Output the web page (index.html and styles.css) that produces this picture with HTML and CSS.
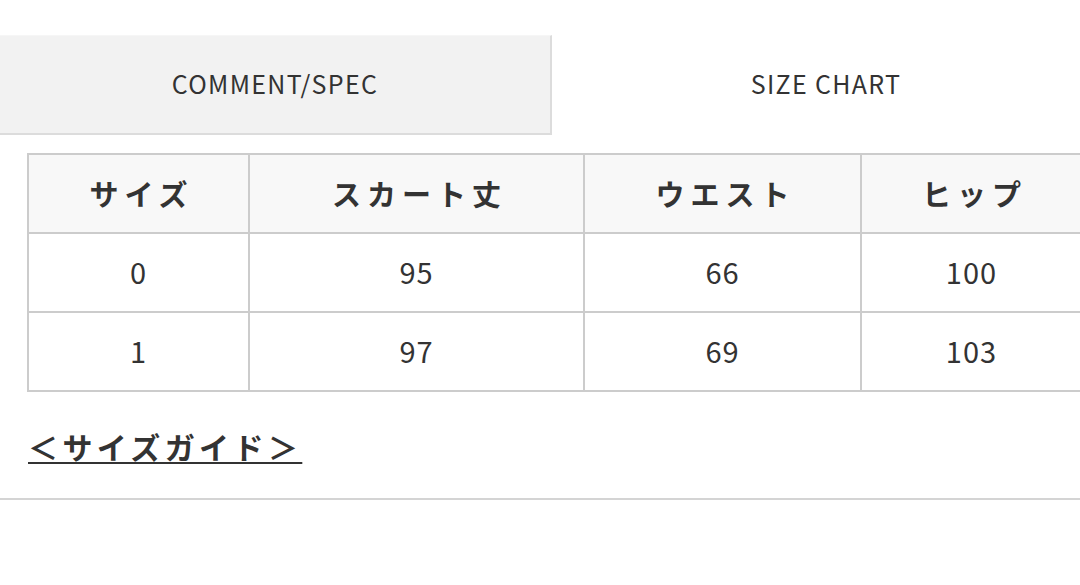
FILE: index.html
```html
<!DOCTYPE html>
<html lang="ja">
<head>
<meta charset="utf-8">
<link rel="stylesheet" href="styles.css">
</head>
<body>
<div class="tabs">
  <div class="tab tab-inactive">COMMENT/SPEC</div>
  <div class="tab tab-active">SIZE CHART</div>
</div>
<div class="content">
  <table class="chart">
    <colgroup>
      <col class="c1"><col class="c2"><col class="c3"><col class="c4">
    </colgroup>
    <thead>
      <tr><th>サイズ</th><th>スカート丈</th><th>ウエスト</th><th>ヒップ</th></tr>
    </thead>
    <tbody>
      <tr><td>0</td><td>95</td><td>66</td><td>100</td></tr>
      <tr><td>1</td><td>97</td><td>69</td><td>103</td></tr>
    </tbody>
  </table>
  <a class="guide" href="#">＜サイズガイド＞</a>
</div>
<hr class="rule">
</body>
</html>
```

FILE: styles.css
```css
html, body {
  margin: 0;
  padding: 0;
  background: #fff;
  overflow: hidden;
}
body {
  font-family: "Noto Sans CJK JP", "Noto Sans", sans-serif;
  color: #333;
  width: 1100px;
}
.tabs {
  display: flex;
  margin-top: 35px;
  height: 100px;
}
.tab {
  display: flex;
  align-items: center;
  justify-content: center;
  font-size: 25px;
  letter-spacing: 1.3px;
  color: #333;
  box-sizing: border-box;
  padding-bottom: 4px;
}
.tab-inactive {
  width: 552px;
  background: #f2f2f2;
  border-right: 2px solid #dcdcdc;
  border-bottom: 2px solid #dcdcdc;
  border-top: 1px solid #f6f6f6;
}
.tab-active {
  width: 548px;
  background: #fff;
}
.content {
  padding: 18px 0 0 27px;
}
.chart {
  border-collapse: collapse;
  table-layout: fixed;
  width: 1054px;
}
.c1 { width: 221px; }
.c2 { width: 335px; }
.c3 { width: 277px; }
.c4 { width: 221px; }
.chart th, .chart td {
  border: 2px solid #cccccc;
  text-align: center;
  padding: 0;
}
.chart th {
  background: #f8f8f8;
  font-weight: 700;
  font-size: 29px;
  letter-spacing: 6px;
  color: #333;
  padding-left: 6px;
  padding-bottom: 1px;
  height: 76px;
}
.chart td {
  font-size: 29px;
  letter-spacing: 1px;
  color: #333;
  padding-bottom: 4px;
  height: 73px;
}
.guide {
  display: inline-block;
  margin-top: 34px;
  margin-left: 1px;
  font-size: 30px;
  line-height: 40px;
  font-weight: 700;
  letter-spacing: 4.4px;
  color: #333;
  text-decoration: underline;
  text-decoration-thickness: 2px;
  text-underline-offset: 3px;
}
.rule {
  margin: 32px 0 0 0;
  border: 0;
  border-top: 2px solid #d4d4d4;
  height: 0;
}
```
